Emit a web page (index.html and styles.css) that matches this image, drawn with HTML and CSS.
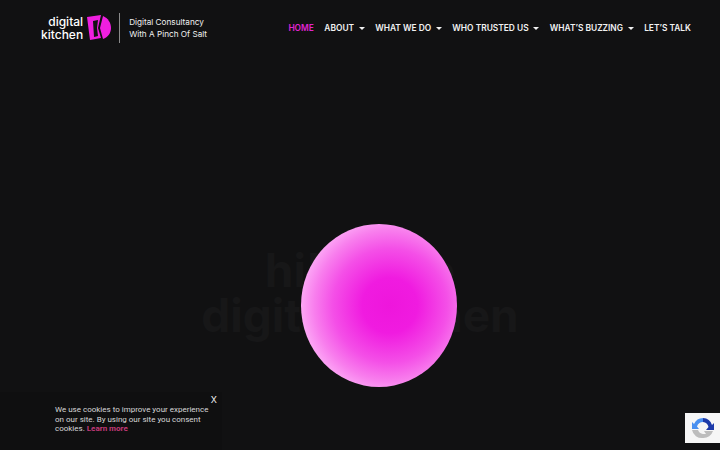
FILE: index.html
```html
<!DOCTYPE html>
<html lang="en">
<head>
    <meta charset="UTF-8">
    <title>Digital Kitchen</title>
    <link rel="stylesheet" href="styles.css">
</head>
<body>
    <header class="header">
        <div class="brand">
            <div class="logo-words">
                <span>digital</span>
                <span>kitchen</span>
            </div>
            <svg class="logo-mark" width="24" height="26" viewBox="0 0 24 26">
                <path d="M0 2 L14 0 L11 13 L14 23 L3 25 Z" fill="#f01fe0"/>
                <path d="M6 6 L11 5 L10 13 L11 21 L7 22 Z" fill="#111"/>
                <path d="M16 1 C21 3 24 8 24 13 C24 18 21 22 16 24 L13 13 Z" fill="#f01fe0"/>
            </svg>
            <div class="tagline">
                <span>Digital Consultancy</span>
                <span>With A Pinch Of Salt</span>
            </div>
        </div>
        <nav class="nav">
            <a class="nav-link active">HOME</a>
            <a class="nav-link">ABOUT <i class="caret"></i></a>
            <a class="nav-link">WHAT WE DO <i class="caret"></i></a>
            <a class="nav-link">WHO TRUSTED US <i class="caret"></i></a>
            <a class="nav-link">WHAT’S BUZZING <i class="caret"></i></a>
            <a class="nav-link">LET’S TALK</a>
        </nav>
    </header>
    <main class="hero">
        <h1 class="hero-title">hi! we’re<br>digital kitchen</h1>
        <div class="ball"></div>
    </main>
    <div class="cookie">
        <span class="cookie-close">X</span>
        <p class="cookie-text">We use cookies to improve your experience on our site. By using our site you consent cookies. <a class="cookie-link">Learn more</a></p>
    </div>
    <div class="recaptcha">
        <svg width="22" height="22" viewBox="0 0 22 22">
            <path d="M11 1 A10 10 0 0 0 2 7 L0 5 L0 12 L7 12 L5 9.500 A6.500 6.500 0 0 1 11 5 Z" fill="#4a90f0"/>
            <path d="M11 1 A10 10 0 0 1 20 8 L22 6 L22 13 L14 13 L16.500 10 A6.500 6.500 0 0 0 11 5 Z" fill="#1c3aa9"/>
            <path d="M0 13 L6 13 A6 6 0 0 0 11 17 L14 17 L12 14 L21 14 A10 10 0 0 1 11 21 A10 10 0 0 1 0 13 Z" fill="#bdbdbd"/>
        </svg>
    </div>
</body>
</html>
```

FILE: styles.css
```css
html, body {
    margin: 0;
    height: 100%;
    overflow: hidden;
}
body {
    background-color: #111112;
    font-family: "Inter", "Liberation Sans", sans-serif;
    color: #fff;
}
.header {
    display: flex;
    justify-content: space-between;
    align-items: center;
    height: 56px;
    padding: 0 29px 0 41px;
}
.brand {
    display: flex;
    align-items: center;
}
.logo-words {
    display: flex;
    flex-direction: column;
    font-size: 12px;
    font-weight: 500;
    line-height: 13px;
    text-align: right;
}
.logo-mark {
    margin: 0 8px 0 4px;
}
.tagline {
    display: flex;
    flex-direction: column;
    border-left: 1px solid #8a8a8a;
    padding: 3px 0 3px 9px;
    font-size: 8.200px;
    line-height: 12px;
    color: #f0f0f0;
}
.nav {
    display: flex;
    align-items: center;
    gap: 10.500px;
}
.nav-link {
    font-size: 8.400px;
    font-weight: 600;
    color: #f2f2f2;
    white-space: nowrap;
}
.nav-link.active {
    color: #e025d0;
}
.caret {
    display: inline-block;
    width: 0;
    height: 0;
    margin-left: 2.500px;
    vertical-align: 1px;
    border-left: 3px solid transparent;
    border-right: 3px solid transparent;
    border-top: 3.500px solid #f2f2f2;
}
.hero {
    position: relative;
    display: flex;
    justify-content: center;
    padding-top: 192px;
}
.hero-title {
    margin: 0;
    font-size: 46px;
    font-weight: 700;
    line-height: 45px;
    text-align: center;
    color: #171718;
}
.ball {
    position: absolute;
    left: 301px;
    top: 168px;
    width: 156px;
    height: 163px;
    border-radius: 50%;
    background: radial-gradient(circle 92px at 57% 50%, #ee16dc 0%, #f01be0 30%, #f44fe7 62%, #f87eed 82%, #fdb0f7 100%);
}
.cookie {
    position: fixed;
    left: 0;
    bottom: 0;
    box-sizing: border-box;
    width: 222px;
    height: 58px;
    padding: 13px 6px 0 55px;
    background-color: #0f0f10;
}
.cookie-close {
    position: absolute;
    top: 2px;
    right: 5px;
    font-size: 9px;
    color: #f0f0f0;
}
.cookie-text {
    margin: 0;
    font-family: "Roboto", "Liberation Sans", sans-serif;
    font-size: 8px;
    line-height: 9.500px;
    color: #d8d8d8;
}
.cookie-link {
    color: #c23a78;
    font-weight: 700;
}
.recaptcha {
    position: fixed;
    right: 0;
    bottom: 7px;
    display: flex;
    align-items: center;
    box-sizing: border-box;
    width: 35px;
    height: 30px;
    padding-left: 7px;
    background-color: #f6f6f6;
}
```
